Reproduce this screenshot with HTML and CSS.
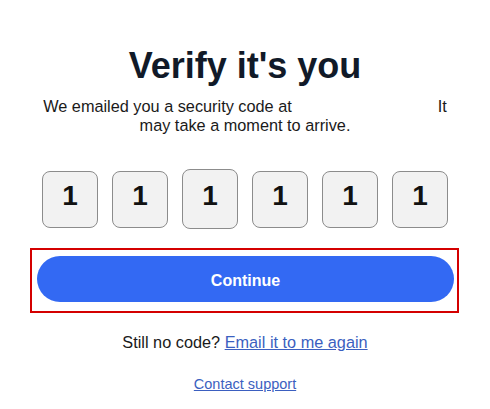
FILE: index.html
```html
<!DOCTYPE html>
<html lang="en">
<head>
<meta charset="utf-8">
<title>Verify it's you</title>
<link rel="stylesheet" href="styles.css">
</head>
<body>
<main class="page">
  <h1 class="title">Verify it's you</h1>
  <p class="intro">We emailed you a security code at<span class="email"></span>It may take a moment to arrive.</p>
  <div class="code">
    <div class="digit">1</div>
    <div class="digit">1</div>
    <div class="digit digit-focus">1</div>
    <div class="digit">1</div>
    <div class="digit">1</div>
    <div class="digit">1</div>
  </div>
  <div class="frame">
    <button class="continue" type="button">Continue</button>
  </div>
  <p class="resend">Still no code? <a href="#" class="link">Email it to me again</a></p>
  <p class="support"><a href="#" class="link">Contact support</a></p>
</main>
</body>
</html>
```
FILE: styles.css
```css
html, body {
  margin: 0;
  padding: 0;
  background: #ffffff;
}
body {
  font-family: "Liberation Sans", Arial, sans-serif;
  color: #1a1a1a;
  width: 490px;
}
.page {
  display: flex;
  flex-direction: column;
  align-items: center;
  padding-top: 45px;
}
.title {
  margin: 0;
  font-size: 36px;
  font-weight: bold;
  color: #111a28;
  line-height: 41px;
}
.intro {
  margin: 11px 0 0 0;
  width: 420px;
  text-align: center;
  font-size: 16.3px;
  line-height: 18.5px;
}
.email {
  display: inline-block;
  width: 146px;
  height: 1px;
}
.code {
  display: flex;
  gap: 14px;
  align-items: center;
  margin-top: 35px;
  height: 60px;
}
.digit {
  box-sizing: border-box;
  width: 56px;
  height: 57px;
  border: 1px solid #8c8c8c;
  border-radius: 8px;
  background: #f2f2f2;
  display: flex;
  align-items: center;
  justify-content: center;
  font-size: 28px;
  font-weight: bold;
  color: #111111;
  padding-bottom: 6px;
}
.digit-focus {
  height: 60px;
}
.frame {
  box-sizing: border-box;
  width: 429px;
  margin-top: 19px;
  border: 2px solid #d40000;
  padding: 6px 3px 9px 5px;
  margin-left: -1px;
}
.continue {
  display: block;
  width: 417px;
  height: 46px;
  border: none;
  border-radius: 23px;
  background: #3369f3;
  color: #ffffff;
  font-family: "Liberation Sans", Arial, sans-serif;
  font-size: 16px;
  font-weight: bold;
  padding: 3px 0 0 0;
}
.resend {
  margin: 20px 0 0 0;
  font-size: 16.3px;
  line-height: 18.5px;
  color: #1a1a1a;
}
.support {
  margin: 24px 0 0 0;
  font-size: 14.5px;
  line-height: 17px;
}
.link {
  color: #3b5fc0;
  text-decoration: underline;
}
```
